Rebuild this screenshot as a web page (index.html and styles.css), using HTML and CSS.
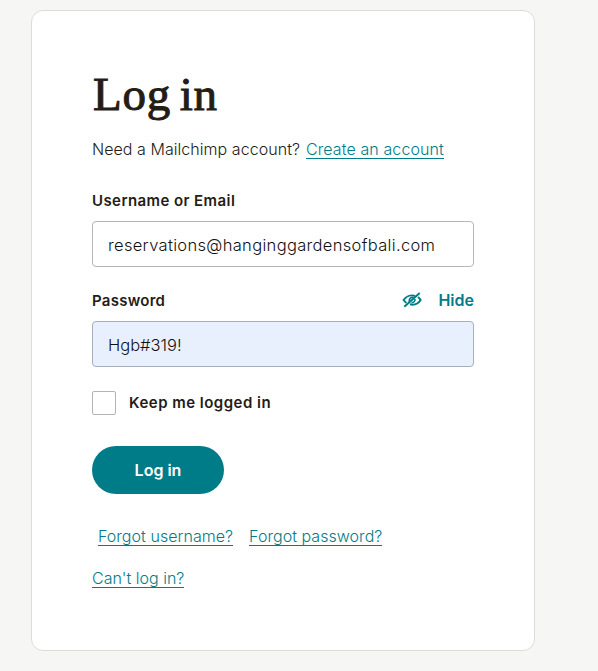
FILE: index.html
```html
<!DOCTYPE html>
<html lang="en">
<head>
<meta charset="utf-8">
<title>Log in</title>
<link rel="stylesheet" href="styles.css">
</head>
<body>
<main class="card">
  <h1 class="title">Log in</h1>
  <p class="intro"><span class="need">Need a Mailchimp account?</span><a class="link create">Create an account</a></p>
  <div class="row"><label class="label user-label">Username or Email</label></div>
  <div class="field"><span class="email">reservations@hanginggardensofbali.com</span></div>
  <div class="row row-password">
    <label class="label pass-label">Password</label>
    <span class="toggle">
      <svg class="eye" viewBox="0 0 20 18" width="20" height="18" fill="none" stroke="currentColor" stroke-width="2">
        <path d="M13 4.900C8.500 3.500 4 5.500 1.600 9c.8 1.200 1.700 2.100 2.900 2.800M16 6.200c1.200.8 2 1.700 2.600 2.800-2.400 3.700-6.300 5.300-10.600 4.300"/>
        <path d="M11.500 6.300C8.500 6 6.800 8 7.300 10.800M13 8c.2 2.200-1.300 3.800-3.500 3.600" stroke-width="1.600"/>
        <path d="M2.300 15.800 17.700 2"/>
      </svg>
      <span class="hide">Hide</span>
    </span>
  </div>
  <div class="field filled"><span class="secret">Hgb#319!</span></div>
  <div class="keep"><span class="box"></span><span class="label keep-label">Keep me logged in</span></div>
  <button class="button" type="button">Log in</button>
  <div class="links"><a class="link forgot-user">Forgot username?</a><a class="link forgot-pass">Forgot password?</a></div>
  <div class="last"><a class="link cant">Can't log in?</a></div>
</main>
</body>
</html>
```
FILE: styles.css
```css
* { box-sizing: border-box; }
body {
  margin: 0;
  padding: 10px 0 0 31px;
  height: 671px;
  overflow: hidden;
  background: #f6f6f4;
  color: #241c15;
  font: 300 16px/20px Inter, "Liberation Sans", sans-serif;
  white-space: nowrap;
}
.card {
  width: 504px;
  height: 641px;
  padding: 53px 60px 0;
  background: #fff;
  border: 1px solid #dcdcdb;
  border-radius: 12px;
}
.title {
  margin: 0 0 0 1px;
  font: 400 47px/60px "Liberation Serif", serif;
  letter-spacing: 0.8px;
  word-spacing: -4px;
  -webkit-text-stroke: 1px #241c15;
}
.intro { display: flex; margin: 15px 0 0; height: 22px; }
.need { width: 214px; letter-spacing: 0.05px; }
.create { letter-spacing: 0.1px; }
.link {
  color: #007c89;
  height: 20px;
  border-bottom: 1px solid #007c89;
}
.row {
  display: flex;
  justify-content: space-between;
  align-items: center;
  height: 20px;
  margin-top: 30px;
}
.label { font-weight: 600; font-size: 15px; letter-spacing: 0.42px; }
.pass-label { letter-spacing: 0.25px; }
.field {
  height: 46px;
  margin-top: 10px;
  padding: 13px 15px 0;
  border: 1px solid #b6b6b4;
  border-radius: 4px;
  color: #111;
  font-size: 16.5px;
}
.email { letter-spacing: 0.33px; }
.row-password { margin-top: 24px; }
.filled { background: #e8f0fe; border-color: #a8afbb; }
.toggle { display: flex; align-items: center; gap: 16px; margin-bottom: 2px; color: #007c89; }
.hide { font-weight: 600; }
.keep { display: flex; align-items: center; gap: 13px; height: 24px; margin-top: 24px; }
.keep-label { letter-spacing: 0.48px; }
.box { width: 24px; height: 24px; border: 1px solid #b4b4b2; border-radius: 2px; }
.button {
  display: block;
  width: 132px;
  height: 48px;
  margin-top: 31px;
  padding: 0;
  border: 0;
  border-radius: 24px;
  background: #007c89;
  color: #fff;
  font: 600 16px/48px Inter, sans-serif;
}
.links { display: flex; gap: 16px; margin: 32px 0 0 6px; letter-spacing: 0.04px; }
.last { display: flex; margin-top: 22px; }
```
